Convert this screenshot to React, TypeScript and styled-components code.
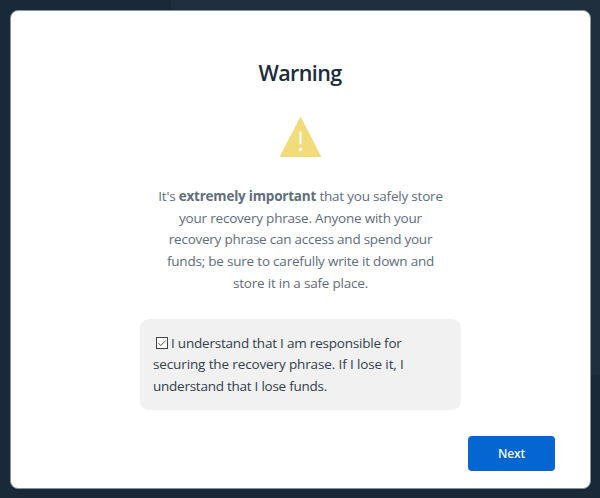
import React from 'react';
import styled, { createGlobalStyle } from 'styled-components';

const GlobalStyle = createGlobalStyle`
  * { box-sizing: border-box; }
  body {
    margin: 0;
    font-family: "Open Sans", "Noto Sans", sans-serif;
  }
`;

const Backdrop = styled.div`
  display: flex;
  width: 600px;
  height: 498px;
  padding: 10px 9px 9px 10px;
  overflow: hidden;
  background:
    linear-gradient(#1f2f3e, #1f2f3e) 171px 0 / 429px 375px no-repeat,
    #1a2938;
`;

const Dialog = styled.main`
  flex: 1;
  display: flex;
  flex-direction: column;
  align-items: center;
  border: 1px solid #8593a0;
  border-radius: 8px;
  background: #fff;
`;

const Title = styled.h1`
  margin: 46px 1px 0 0;
  font-size: 21.5px;
  font-weight: 600;
  line-height: 32px;
  letter-spacing: -0.6px;
  color: #1d2b3a;
`;

const WarningIcon = styled.svg`
  display: block;
  width: 44px;
  height: 42px;
  margin-top: 27px;
`;

const Message = styled.p`
  margin: 28px 0 0;
  text-align: center;
  font-size: 13.5px;
  line-height: 21.7px;
  color: #5f6d7c;
`;

const Line = styled.span<{ $spacing?: number }>`
  display: block;
  white-space: nowrap;
  letter-spacing: ${({ $spacing = -0.21 }) => $spacing}px;
`;

const Consent = styled.label`
  display: block;
  width: 321px;
  height: 91px;
  margin-top: 24px;
  padding: 14px 13px 12px;
  border-radius: 9px;
  background: #f1f1f1;
  font-size: 13.5px;
  line-height: 21.9px;
  color: #33404e;
`;

const Check = styled.svg`
  width: 12px;
  height: 12px;
  margin: 0 3px 0 3px;
  vertical-align: -1px;
`;

const Footer = styled.footer`
  display: flex;
  align-self: stretch;
  justify-content: flex-end;
  padding: 26px 35px 0 0;
`;

const NextButton = styled.button`
  width: 87px;
  height: 35px;
  padding: 0;
  border: 0;
  border-radius: 4px;
  background: #0566d1;
  color: #f4f8fd;
  font: 600 12px "Open Sans", "Noto Sans", sans-serif;
  letter-spacing: -0.2px;
`;

export default function App() {
  return (
    <>
      <GlobalStyle />
      <Backdrop>
        <Dialog>
          <Title>Warning</Title>
          <WarningIcon viewBox="0 0 44 42" aria-label="Warning">
            <path d="M21.5 1.5 41.7 40.5H1.3Z" fill="#f1db7a" stroke="#f1db7a" strokeWidth="1" strokeLinejoin="round" />
            <path d="M21.5 16.5V27.5" stroke="#fff" strokeWidth="2" strokeLinecap="round" />
            <circle cx="21.5" cy="33.5" r="1.8" fill="#fff" />
          </WarningIcon>
          <Message>
            <Line>It's <b>extremely important</b> that you safely store</Line>
            <Line>your recovery phrase. Anyone with your</Line>
            <Line $spacing={-0.25}>recovery phrase can access and spend your</Line>
            <Line>funds; be sure to carefully write it down and</Line>
            <Line>store it in a safe place.</Line>
          </Message>
          <Consent>
            <Line>
              <Check viewBox="0 0 12 12">
                <rect x="0.5" y="0.5" width="11" height="11" fill="#fff" stroke="#444" />
                <path d="M2.3 6 4.8 8.5 9.8 3.5" fill="none" stroke="#555" strokeWidth="1" />
              </Check>
              I understand that I am responsible for
            </Line>
            <Line $spacing={-0.13}>securing the recovery phrase. If I lose it, I</Line>
            <Line $spacing={-0.25}>understand that I lose funds.</Line>
          </Consent>
          <Footer>
            <NextButton type="button">Next</NextButton>
          </Footer>
        </Dialog>
      </Backdrop>
    </>
  );
}
